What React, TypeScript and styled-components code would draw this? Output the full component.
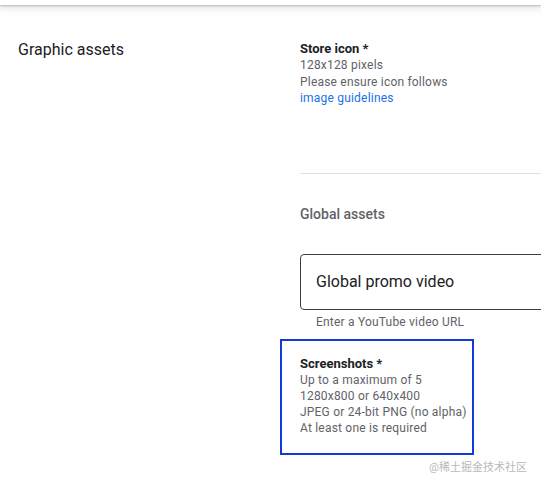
import React from "react";
import styled, { createGlobalStyle } from "styled-components";

const Global = createGlobalStyle`
  html, body { margin: 0; padding: 0; background: #ffffff; }
  body { font-family: Roboto, "Noto Sans", Arial, sans-serif; -webkit-font-smoothing: antialiased; }
  * { box-sizing: border-box; }
`;

const Page = styled.div`
  position: relative;
  width: 541px;
  height: 488px;
  overflow: hidden;
  background: #fff;
`;

const TopBar = styled.div`
  height: 5px;
  background: #fff;
  box-shadow: 0 1px 2px rgba(60, 64, 67, 0.3), 0 2px 6px 2px rgba(60, 64, 67, 0.12);
`;

const Content = styled.div`
  display: grid;
  grid-template-columns: 280px 1fr;
  padding-top: 35px;
`;

const SideTitle = styled.h2`
  margin: 0;
  padding-left: 18px;
  font-size: 16px;
  line-height: 20px;
  font-weight: 400;
  color: #202124;
`;

const Column = styled.div`
  display: flex;
  flex-direction: column;
  min-width: 0;
`;

const Block = styled.div<{ $highlight?: boolean }>`
  padding-left: ${(p) => (p.$highlight ? "18px" : "20px")};
  ${(p) =>
    p.$highlight &&
    `
    width: 194px;
    border: 2px solid #1539d3;
    padding-top: 14px;
    padding-bottom: 17px;
  `}
`;

const FieldTitle = styled.div`
  font-size: 13px;
  line-height: 17px;
  font-weight: 700;
  color: #202124;
`;

const Hint = styled.div`
  font-size: 12px;
  line-height: ${(p: { $lh?: number }) => (p.$lh ? `${p.$lh}px` : "16px")};
  color: #5f6368;
  letter-spacing: 0.2px;
`;

const Link = styled.a`
  color: #1a73e8;
  text-decoration: none;
`;

const Divider = styled.div`
  margin: 66px 0 0 20px;
  height: 1px;
  background: #e0e0e0;
`;

const SectionLabel = styled.div`
  margin: 30px 0 0 20px;
  font-size: 14px;
  line-height: 20px;
  font-weight: 500;
  color: #5f6368;
`;

const InputBox = styled.div`
  margin: 30px 0 0 20px;
  height: 56px;
  width: 300px;
  border: 1px solid #3c4043;
  border-radius: 4px;
  display: flex;
  align-items: center;
  padding-left: 15px;
  font-size: 16px;
  line-height: 20px;
  color: #202124;
`;

const Helper = styled.div`
  margin: 4px 0 9px 36px;
  font-size: 12px;
  line-height: 16px;
  color: #5f6368;
  letter-spacing: 0.2px;
`;

const Watermark = styled.div`
  position: absolute;
  right: 14px;
  bottom: 13px;
  font-size: 11px;
  line-height: 14px;
  color: #b9b9b9;
  font-family: Roboto, "Noto Sans CJK SC", sans-serif;
`;

export default function App() {
  return (
    <Page>
      <Global />
      <TopBar />
      <Content>
        <SideTitle>Graphic assets</SideTitle>
        <Column>
          <Block>
            <FieldTitle>Store icon *</FieldTitle>
            <Hint $lh={16.5}>128x128 pixels</Hint>
            <Hint $lh={16.5}>Please ensure icon follows</Hint>
            <Hint $lh={16.5}>
              <Link href="#">image guidelines</Link>
            </Hint>
          </Block>
          <Divider />
          <SectionLabel>Global assets</SectionLabel>
          <InputBox>Global promo video</InputBox>
          <Helper>Enter a YouTube video URL</Helper>
          <Block $highlight>
            <FieldTitle>Screenshots *</FieldTitle>
            <Hint>Up to a maximum of 5</Hint>
            <Hint>1280x800 or 640x400</Hint>
            <Hint>JPEG or 24-bit PNG (no alpha)</Hint>
            <Hint>At least one is required</Hint>
          </Block>
        </Column>
      </Content>
      <Watermark>@稀土掘金技术社区</Watermark>
    </Page>
  );
}
